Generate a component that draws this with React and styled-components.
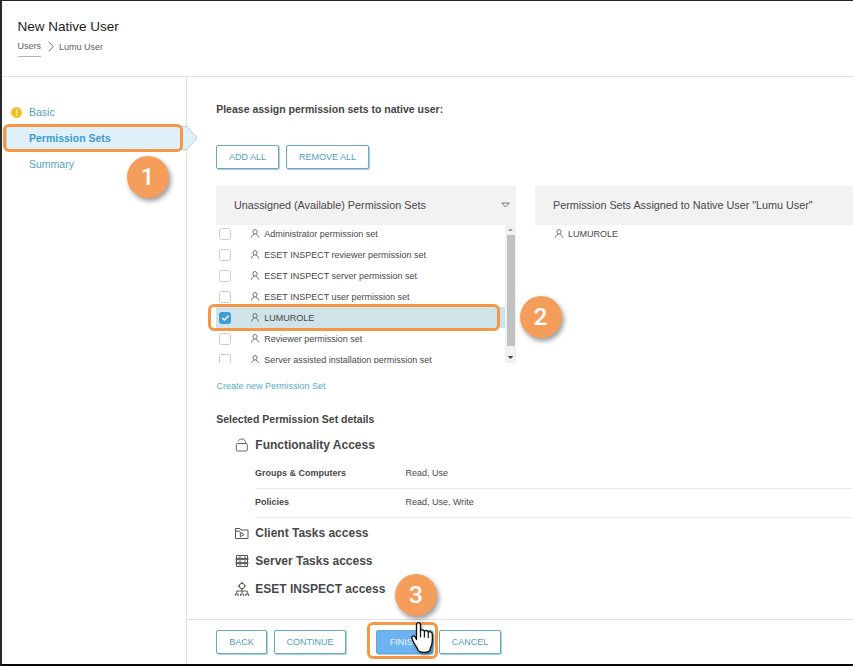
import React from 'react';
import styled, { createGlobalStyle, css } from 'styled-components';

const Global = createGlobalStyle`
  * { box-sizing: border-box; }
  body { margin: 0; background: #fff; overflow: hidden; }
`;

const Page = styled.div`
  position: relative;
  display: flex;
  flex-direction: column;
  width: 853px;
  height: 666px;
  overflow: hidden;
  background: #fff;
  border-top: 1px solid #252a31;
  border-left: 2px solid #252a2e;
  border-bottom: 2px solid #08080a;
  font: 9px/12px 'Liberation Sans', Arial, sans-serif;
  color: #484848;
  white-space: nowrap;
`;

const Header = styled.header`
  height: 76px;
  flex: none;
  padding: 17px 0 0 15.5px;
  border-bottom: 1px solid #dfe2e3;
`;

const Title = styled.h1`
  margin: 0;
  font-size: 13.5px;
  line-height: 18px;
  font-weight: 400;
  color: #1c1c1c;
`;

const Breadcrumb = styled.nav`
  display: flex;
  align-items: flex-start;
  margin-top: 3px;
  color: #5c5c5c;
  svg { margin: 2px 5px 0 7px; }
`;

const Crumb = styled.span`
  height: 18px;
  line-height: ${p => (p.$link ? '14px' : '16px')};
  border-bottom: ${p => (p.$link ? '1px solid #b4b4b4' : 'none')};
`;

const Body = styled.div`
  display: flex;
  flex: 1;
  min-height: 0;
`;

const Sidebar = styled.aside`
  width: 185px;
  flex: none;
  padding-top: 22px;
  border-right: 1px solid #dfe2e3;
`;

const Step = styled.div`
  position: relative;
  display: flex;
  align-items: center;
  height: 26px;
  padding-left: 9px;
  font-size: 10.5px;
  color: #549fbf;
  ${p => p.$active && css`
    height: 24px;
    margin: 1px 0 1px 4px;
    padding-left: 5px;
    font-weight: 700;
    color: #3c9bcb;
    background: #e0f0f9;
    border: 1px solid #b3d2e0;
    border-right: 0;
  `}
`;

const StepMark = styled.span`
  display: flex;
  width: 18px;
  flex: none;
  ${p => p.$narrow && css`width: 17px;`}
`;

const StepArrow = styled.svg`
  position: absolute;
  left: 100%;
  top: -1px;
`;

const Main = styled.main`
  display: flex;
  flex-direction: column;
  flex: 1;
  min-width: 0;
`;

const Content = styled.section`
  height: 543px;
  flex: none;
  padding: 25px 0 0 29px;
  border-bottom: 1px solid #e0e3e5;
`;

const Heading = styled.h2`
  margin: 0 0 0 0.2px;
  font-size: 10.5px;
  line-height: 14px;
  font-weight: 700;
  color: #444;
`;

const Actions = styled.div`
  display: flex;
  gap: 7px;
  margin-top: 29px;
`;

const Button = styled.button`
  width: ${p => p.$width}px;
  height: 24px;
  flex: none;
  padding: 0 0 1px;
  border: 1px solid #66a9c5;
  border-radius: 2px;
  background: ${p => (p.$primary ? '#6db3f2' : '#fff')};
  color: ${p => (p.$primary ? '#edf6fc' : '#519ebc')};
  box-shadow: 1px 1px 1px #a9cbd7;
  font: 9px/12px 'Liberation Sans', Arial, sans-serif;
  text-align: center;
`;

const Panels = styled.div`
  display: flex;
  gap: 19px;
  margin-top: 17px;
`;

const Panel = styled.div`
  width: ${p => p.$width}px;
  height: 177px;
  flex: none;
`;

const PanelHeader = styled.div`
  display: flex;
  align-items: center;
  justify-content: space-between;
  height: 39px;
  padding: 0 6px 1px 18px;
  background: #f2f2f2;
  font-size: 10.8px;
`;

const PanelBody = styled.div`
  display: flex;
  height: 138px;
  overflow: hidden;
`;

const List = styled.div`
  flex: 1;
  margin-top: -2px;
`;

const Row = styled.div`
  display: flex;
  align-items: center;
  height: 21px;
  padding-left: ${p => (p.$plain ? 19.8 : 3)}px;
  background: ${p => (p.$selected ? '#cfe4e9' : 'transparent')};
  svg { flex: none; }
`;

const Checkbox = styled.span`
  display: flex;
  align-items: center;
  justify-content: center;
  width: 12px;
  height: 12px;
  margin-right: 20px;
  border: 1px solid ${p => (p.$checked ? '#3f9dd5' : '#cbcdce')};
  border-radius: 2.5px;
  background: ${p => (p.$checked ? '#3f9dd5' : '#fff')};
`;

const RowLabel = styled.span`
  margin-left: 5.3px;
`;

const Scrollbar = styled.div`
  display: flex;
  flex-direction: column;
  align-items: center;
  width: 11px;
  height: 138px;
  background: #f1f1f1;
`;

const Thumb = styled.div`
  width: 8px;
  height: 111px;
  margin-bottom: 7px;
  background: #c1c1c1;
`;

const CreateLink = styled.a`
  display: block;
  margin: 17px 0 20px 0.4px;
  color: #56abcf;
`;

const Section = styled.div`
  display: flex;
  align-items: center;
  height: 28px;
  margin-top: ${p => (p.$first ? 5 : 0)}px;
  padding-left: 18px;
  font-size: 12px;
  font-weight: 700;
  line-height: 16px;
  svg { margin-right: 5.3px; }
`;

const Permissions = styled.div`
  margin: 0 0 1px 39px;
`;

const Permission = styled.div`
  display: grid;
  grid-template-columns: 150.4px 1fr;
  align-items: center;
  height: ${p => p.$height}px;
  padding-bottom: ${p => p.$lift || 0}px;
  border-bottom: 1px solid #e9ebec;
`;

const Footer = styled.footer`
  display: flex;
  padding: 10px 0 0 29px;
  ${Button} + ${Button} { margin-left: 7px; }
  ${Button}:nth-child(3) { margin-left: 30px; }
  ${Button}:nth-child(4) { margin-left: 6px; }
`;

const Highlight = styled.div`
  position: absolute;
  left: ${p => p.$x}px;
  top: ${p => p.$y}px;
  width: ${p => p.$w}px;
  height: ${p => p.$h}px;
  border: 3px solid #f59747;
  border-radius: 6px;
`;

const Badge = styled.div`
  position: absolute;
  left: ${p => p.$x}px;
  top: ${p => p.$y}px;
  width: 42px;
  height: 42px;
  border-radius: 50%;
  background: #f59e5b;
  box-shadow: 2px 3px 5px rgba(0, 0, 0, 0.4);
  color: #fff;
  font: 500 24.5px/42px Roboto, sans-serif;
  text-align: center;
`;

const Cursor = styled.svg`
  position: absolute;
  left: 407px;
  top: 620px;
  filter: drop-shadow(1px 2px 1px rgba(0, 0, 0, 0.4));
`;

const PersonIcon = () => (
  <svg width="8" height="9" viewBox="0 0 8 9" fill="none" stroke="#555" strokeWidth="0.9">
    <path d="M4 .6c-1.4 0-2 .9-2 2.1S2.8 5 4 5s2-1.100 2-2.300S5.400.6 4 .6ZM.5 8.500C.7 6.800 1.600 5.800 2.900 5.200L3.200 4.800M7.500 8.500C7.300 6.800 6.400 5.800 5.100 5.200L4.800 4.800" />
  </svg>
);

const LockIcon = () => (
  <svg width="16" height="14" viewBox="0 0 16 14" fill="none" stroke="#666" strokeWidth="1">
    <rect x="2.300" y="5.500" width="11" height="7.500" rx="1" />
    <path d="M4 3.500C4.700 1.900 6 1 7.800 1c2.300 0 3.900 1.600 3.900 4.500" />
  </svg>
);

const FolderIcon = () => (
  <svg width="16" height="14" viewBox="0 0 16 14" fill="none" stroke="#555" strokeWidth="1">
    <path d="M1.500 12.500V2.500H6l1 1.500h7v8.500Z" />
    <path d="M2 5.200h4M6.300 6.200v4.600L10 8.500Z" />
  </svg>
);

const ServerIcon = () => (
  <svg width="16" height="14" viewBox="0 0 16 14" fill="none" stroke="#555" strokeWidth="1">
    <path d="M2.500 1.500h11v3.500h-11ZM2.500 5h11v4h-11ZM2.500 9h11v3.500h-11ZM1.300 5h13.400M1.300 9h13.400" />
    <path d="M4.500 3.200h3M10 3.200h2M4.500 7h3M10 7h2M4.500 10.800h3M10 10.800h2" strokeWidth="0.900" />
  </svg>
);

const InspectIcon = () => (
  <svg width="16" height="16" viewBox="0 0 16 16" fill="none" stroke="#555" strokeWidth="1">
    <circle cx="8" cy="5" r="2.700" />
    <path d="M8 .7v2.300M8 7v5M3.700 5h2.300M10 5h2.300M2.700 12.500v-2.500h10.600v2.500M1.300 15v-2h2.900v2M6.600 15v-2h2.800v2M11.800 15v-2h2.900v2" />
  </svg>
);

const SETS = [
  'Administrator permission set',
  'ESET INSPECT reviewer permission set',
  'ESET INSPECT server permission set',
  'ESET INSPECT user permission set',
  'LUMUROLE',
  'Reviewer permission set',
  'Server assisted installation permission set',
];

function PermissionRow({ name }) {
  const selected = name === 'LUMUROLE';
  return (
    <Row $selected={selected}>
      <Checkbox $checked={selected}>
        {selected && (
          <svg width="9" height="8" viewBox="0 0 9 8" fill="none" stroke="#fff" strokeWidth="1.400">
            <path d="m1.200 3.900 2.200 2.200L7.700 1.800" />
          </svg>
        )}
      </Checkbox>
      <PersonIcon />
      <RowLabel>{name}</RowLabel>
    </Row>
  );
}

export default function App() {
  return (
    <>
      <Global />
      <Page>
        <Header>
          <Title>New Native User</Title>
          <Breadcrumb>
            <Crumb $link>Users</Crumb>
            <svg width="6" height="11" viewBox="0 0 6 11" fill="none" stroke="#777">
              <path d="m.7.6 4.500 4.900L.7 10.400" />
            </svg>
            <Crumb>Lumu User</Crumb>
          </Breadcrumb>
        </Header>
        <Body>
          <Sidebar>
            <Step>
              <StepMark>
                <svg width="11" height="11" viewBox="0 0 11 11">
                  <circle cx="5.500" cy="5.500" r="5.400" fill="#f4bc17" />
                  <path d="M5.500 2.200v4.200M5.500 7.500v1.400" stroke="#fff8da" strokeWidth="1.400" />
                </svg>
              </StepMark>
              Basic
            </Step>
            <Step $active>
              <StepMark $narrow />
              Permission Sets
              <StepArrow width="12" height="24" viewBox="0 0 12 24">
                <path d="M0 .5h1L11 12 1 23.500H0" fill="#e0f0f9" stroke="#b3d2e0" />
              </StepArrow>
            </Step>
            <Step>
              <StepMark />
              Summary
            </Step>
          </Sidebar>
          <Main>
            <Content>
              <Heading>Please assign permission sets to native user:</Heading>
              <Actions>
                <Button $width={63}>ADD ALL</Button>
                <Button $width={83}>REMOVE ALL</Button>
              </Actions>
              <Panels>
                <Panel $width={300}>
                  <PanelHeader>
                    Unassigned (Available) Permission Sets
                    <svg width="9" height="6" viewBox="0 0 9 6" fill="none" stroke="#666" strokeWidth="0.900">
                      <path d="M.7 1h7.600L4.500 5Z" />
                    </svg>
                  </PanelHeader>
                  <PanelBody>
                    <List>
                      {SETS.map(name => <PermissionRow key={name} name={name} />)}
                    </List>
                    <Scrollbar>
                      <svg width="7" height="10" viewBox="0 0 7 10"><path d="M1 6h5L3.500 3.500Z" fill="#999" /></svg>
                      <Thumb />
                      <svg width="7" height="10" viewBox="0 0 7 10"><path d="M.7 3h5.600L3.500 6Z" fill="#444" /></svg>
                    </Scrollbar>
                  </PanelBody>
                </Panel>
                <Panel $width={318}>
                  <PanelHeader>Permission Sets Assigned to Native User "Lumu User"</PanelHeader>
                  <PanelBody>
                    <List>
                      <Row $plain><PersonIcon /><RowLabel>LUMUROLE</RowLabel></Row>
                    </List>
                  </PanelBody>
                </Panel>
              </Panels>
              <CreateLink>Create new Permission Set</CreateLink>
              <Heading>Selected Permission Set details</Heading>
              <Section $first><LockIcon />Functionality Access</Section>
              <Permissions>
                <Permission $height={30} $lift={1}><b>Groups &amp; Computers</b><span>Read, Use</span></Permission>
                <Permission $height={29} $lift={2}><b>Policies</b><span>Read, Use, Write</span></Permission>
              </Permissions>
              <Section><FolderIcon />Client Tasks access</Section>
              <Section><ServerIcon />Server Tasks access</Section>
              <Section><InspectIcon />ESET INSPECT access</Section>
            </Content>
            <Footer>
              <Button $width={51}>BACK</Button>
              <Button $width={72}>CONTINUE</Button>
              <Button $width={57} $primary>FINISH</Button>
              <Button $width={62}>CANCEL</Button>
            </Footer>
          </Main>
        </Body>
        <Highlight $x={0.6} $y={123} $w={180.5} $h={28} />
        <Highlight $x={206} $y={303} $w={292} $h={27} />
        <Highlight $x={365} $y={621} $w={71} $h={37} />
        <Badge $x={124.500} $y={155}>1</Badge>
        <Badge $x={517.500} $y={295}>2</Badge>
        <Badge $x={393} $y={573}>3</Badge>
        <Cursor width="26" height="36" viewBox="0 0 26 36">
          <path
            d="M7.500 18.500V4C7.500.9 11.500.9 11.500 4v6.200c.3-1.800 3.300-1.800 3.900.4.500-1.600 3.300-1.500 3.900.8.700-1.300 3.700-.8 3.900 1.400.3 3.500.2 7.500-.4 10.500-.5 2-1.400 3-1.600 4.700-.3 2.300-1.700 3.300-6 3.300s-6-.8-6.600-3.200C7.800 25.500 4.500 23 3 17.500c-.9-3.200 2.700-4 4.500 1Z"
            fill="#fff"
            stroke="#111"
            strokeWidth="1.300"
            strokeLinejoin="round"
          />
          <path d="M11.500 10v6M15.400 11v5M19.300 12v4.500" stroke="#111" strokeWidth="1.200" strokeLinecap="round" />
        </Cursor>
      </Page>
    </>
  );
}
